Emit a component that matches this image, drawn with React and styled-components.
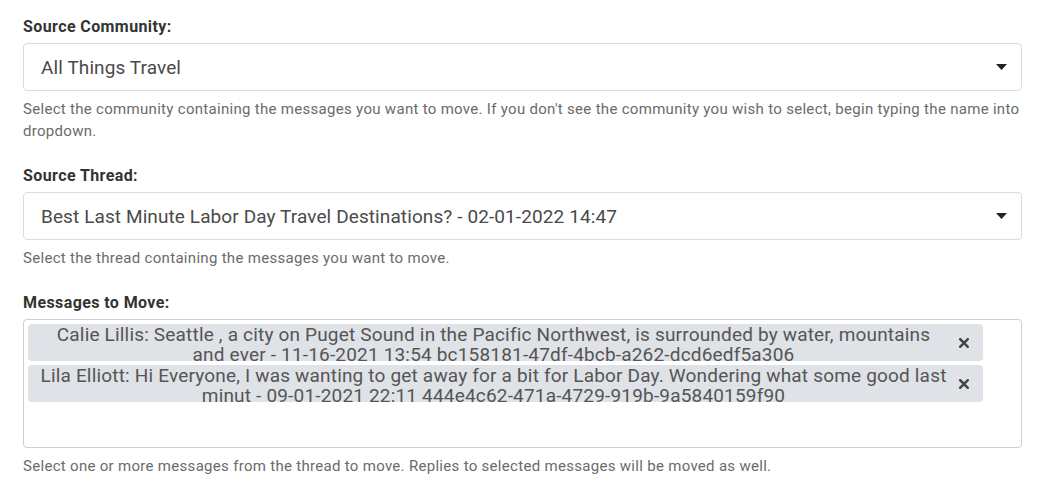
import styled, { createGlobalStyle } from "styled-components";

const GlobalStyle = createGlobalStyle`
  html, body { margin: 0; padding: 0; background: #fff; }
  body { font-family: "Roboto", "Liberation Sans", sans-serif; }
`;

const Page = styled.div`
  padding: 16px 23px 0 23px;
  display: flex;
  flex-direction: column;
`;

const Field = styled.div`
  display: flex;
  flex-direction: column;
  margin-bottom: 23px;
`;

const Label = styled.label`
  font-size: 16px;
  line-height: 22px;
  font-weight: 700;
  letter-spacing: 0.4px;
  color: #333;
  margin-bottom: 5px;
`;

const Select = styled.div`
  height: 48px;
  box-sizing: border-box;
  border: 1px solid #dcdcdc;
  border-radius: 4px;
  display: flex;
  align-items: center;
  justify-content: space-between;
  padding: 0 14px 0 17px;
  font-size: 19px;
  letter-spacing: 0.1px;
  color: #4a4a4a;
`;

const Help = styled.div`
  margin-top: 7px;
  font-size: 15px;
  line-height: 22px;
  letter-spacing: 0.3px;
  color: #6b6b6b;
`;

const MultiBox = styled.div`
  height: 129px;
  box-sizing: border-box;
  border: 1px solid #cfcfcf;
  border-radius: 4px;
  padding: 4px 38px 4px 4px;
  display: flex;
  flex-direction: column;
  gap: 4px;
`;

const Chip = styled.div`
  height: 37px;
  box-sizing: border-box;
  background: #dfe2e6;
  border-radius: 4px;
  display: flex;
  align-items: flex-start;
  padding: 1px 3px 0 12px;
  overflow: hidden;
`;

const ChipText = styled.div`
  flex: 1;
  text-align: center;
  font-size: 19px;
  line-height: 19.5px;
  letter-spacing: 0.18px;
  color: #555;
`;

const Remove = styled.button`
  width: 33px;
  height: 36px;
  flex: none;
  border: 0;
  background: none;
  padding: 0;
  display: flex;
  align-items: center;
  justify-content: center;
  color: #444;
  cursor: pointer;
`;

const Caret = () => (
  <svg width="11" height="6" viewBox="0 0 11 6">
    <path d="M0 0H11L5.5 6Z" fill="#222" />
  </svg>
);

const Cross = () => (
  <svg width="10" height="10" viewBox="0 0 10 10">
    <path d="M1.2 1.2L8.8 8.8M8.8 1.2L1.2 8.8" stroke="currentColor" strokeWidth="2.4" strokeLinecap="square" />
  </svg>
);

const messages = [
  "Calie Lillis: Seattle , a city on Puget Sound in the Pacific Northwest, is surrounded by water, mountains and ever - 11-16-2021 13:54 bc158181-47df-4bcb-a262-dcd6edf5a306",
  "Lila Elliott: Hi Everyone, I was wanting to get away for a bit for Labor Day. Wondering what some good last minut - 09-01-2021 22:11 444e4c62-471a-4729-919b-9a5840159f90",
];

export default function App() {
  return (
    <>
      <GlobalStyle />
      <Page>
        <Field>
          <Label>Source Community:</Label>
          <Select>
            <span>All Things Travel</span>
            <Caret />
          </Select>
          <Help>
            Select the community containing the messages you want to move. If you don't see the community you wish to select, begin typing the name into dropdown.
          </Help>
        </Field>
        <Field>
          <Label>Source Thread:</Label>
          <Select>
            <span>Best Last Minute Labor Day Travel Destinations? - 02-01-2022 14:47</span>
            <Caret />
          </Select>
          <Help>Select the thread containing the messages you want to move.</Help>
        </Field>
        <Field>
          <Label>Messages to Move:</Label>
          <MultiBox>
            {messages.map((m, i) => (
              <Chip key={i}>
                <ChipText>{m}</ChipText>
                <Remove aria-label="remove">
                  <Cross />
                </Remove>
              </Chip>
            ))}
          </MultiBox>
          <Help>Select one or more messages from the thread to move. Replies to selected messages will be moved as well.</Help>
        </Field>
      </Page>
    </>
  );
}
